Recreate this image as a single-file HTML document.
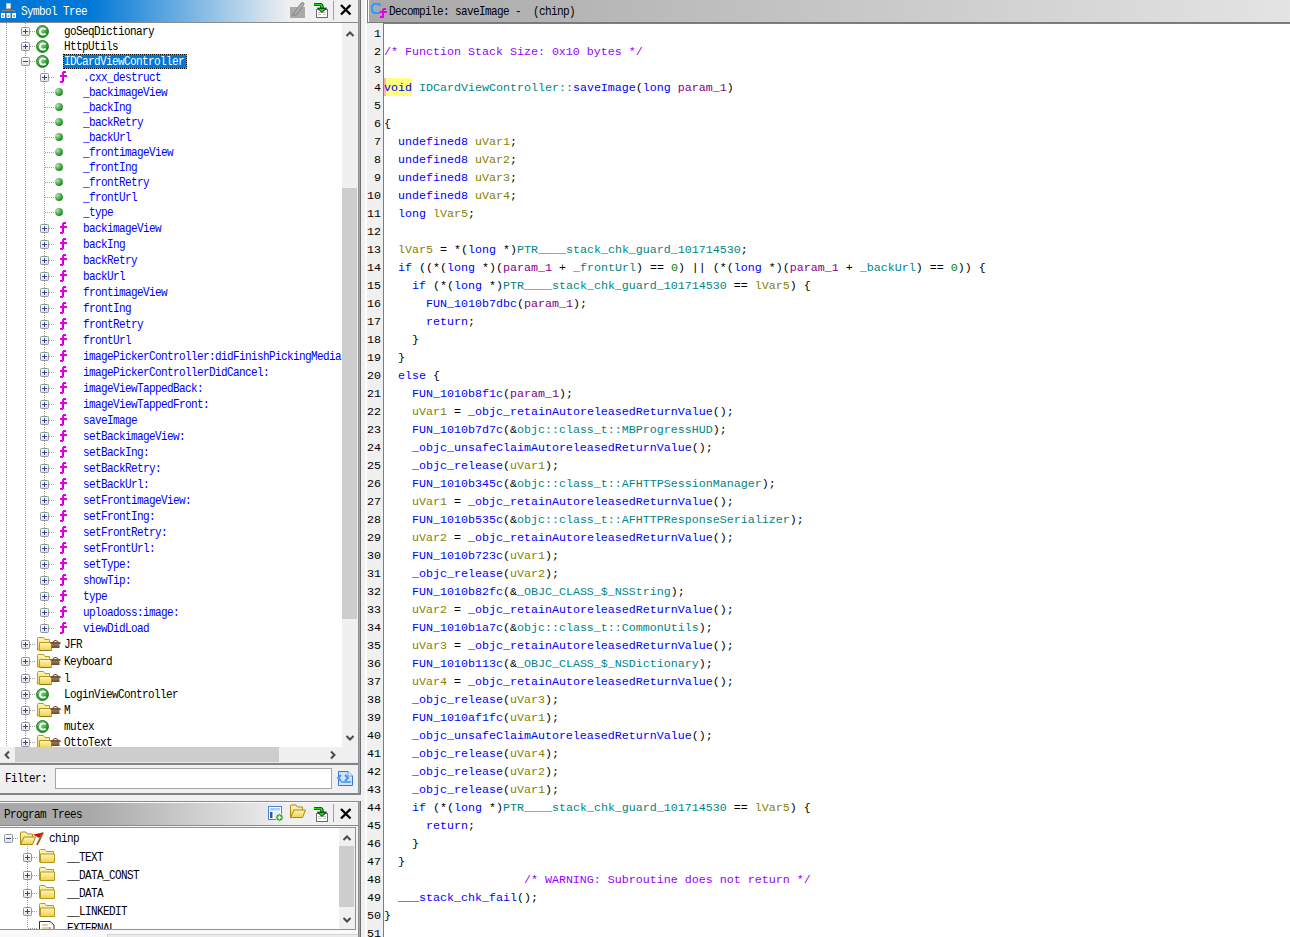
<!DOCTYPE html><html><head><meta charset='utf-8'><style>
*{margin:0;padding:0;box-sizing:border-box}
html,body{width:1290px;height:937px;overflow:hidden;background:#f0f0f0;position:relative}
.a{position:absolute}
svg.a{overflow:visible}
.t{position:absolute;white-space:pre;font-family:'Liberation Mono',monospace;font-size:11px;letter-spacing:-0.6px;line-height:15px;color:#000;transform:scaleY(1.14);transform-origin:0 3.7px}
.code{position:absolute;left:384px;top:25px;font-family:'Liberation Mono',monospace;font-size:11.6667px;line-height:18px;white-space:pre;color:#000}
.ln{position:absolute;left:360px;top:25px;width:21px;text-align:right;font-family:'Liberation Mono',monospace;font-size:11.6667px;line-height:18px;white-space:pre;color:#000;letter-spacing:0px}
.k{color:#0000ff}.v{color:#858000}.g{color:#008585}.p{color:#850085}.f{color:#0000ff}.c{color:#9600ff}.n{color:#008000}
.dv{position:absolute;width:1px;background:repeating-linear-gradient(to bottom,#a0a0a0 0 1px,transparent 1px 2px)}
.dh{position:absolute;height:1px;background:repeating-linear-gradient(to right,#a0a0a0 0 1px,transparent 1px 2px)}
</style></head><body>
<svg width="0" height="0" style="position:absolute">
<defs>
<linearGradient id="gbox" x1="0" y1="0" x2="0" y2="1"><stop offset="0" stop-color="#ffffff"/><stop offset="1" stop-color="#e0e0e0"/></linearGradient>
<radialGradient id="gcls" cx="0.4" cy="0.35" r="0.7"><stop offset="0" stop-color="#a0d4a0"/><stop offset="0.45" stop-color="#4fae4f"/><stop offset="0.8" stop-color="#229022"/><stop offset="1" stop-color="#0e780e"/></radialGradient>
<radialGradient id="gdot" cx="0.3" cy="0.3" r="0.8"><stop offset="0" stop-color="#b8e0b8"/><stop offset="0.5" stop-color="#5cb05c"/><stop offset="1" stop-color="#108010"/></radialGradient>
<linearGradient id="gfold" x1="0" y1="0" x2="0" y2="1"><stop offset="0" stop-color="#fff6c0"/><stop offset="1" stop-color="#f0d048"/></linearGradient>
<linearGradient id="gbrief" x1="0" y1="0" x2="0" y2="1"><stop offset="0" stop-color="#a07858"/><stop offset="1" stop-color="#6a4830"/></linearGradient>
<symbol id="bplus" viewBox="0 0 9 9"><rect x="0.5" y="0.5" width="8" height="8" rx="1" fill="url(#gbox)" stroke="#959595"/><path d="M2 4.5H7M4.5 2V7" stroke="#2d4490" stroke-width="1"/></symbol>
<symbol id="bminus" viewBox="0 0 9 9"><rect x="0.5" y="0.5" width="8" height="8" rx="1" fill="url(#gbox)" stroke="#959595"/><path d="M2 4.5H7" stroke="#2d4490" stroke-width="1"/></symbol>
<symbol id="cls" viewBox="0 0 13 13"><circle cx="6.5" cy="6.5" r="6" fill="url(#gcls)" stroke="#138313" stroke-width="0.9"/><path d="M9.6 4.6C9.1 3.8 8.2 3.4 7.1 3.4C5.3 3.4 4 4.8 4 6.5C4 8.2 5.3 9.6 7.1 9.6C8.2 9.6 9.1 9.2 9.6 8.4" fill="none" stroke="#fff" stroke-width="1.9"/></symbol>
<symbol id="dot" viewBox="0 0 8 8"><circle cx="4" cy="4" r="3.9" fill="url(#gdot)"/></symbol>
<symbol id="fn" viewBox="0 0 7 12" shape-rendering="crispEdges"><rect x="2" y="1" width="2" height="10" fill="#e600e6"/><rect x="3" y="0" width="3" height="2" fill="#e600e6"/><rect x="0" y="4" width="7" height="2" fill="#e600e6"/><rect x="0" y="10" width="3" height="2" fill="#e600e6"/><rect x="4" y="1" width="1" height="1" fill="#b000b0"/><rect x="3" y="5" width="1" height="5" fill="#b800b8"/></symbol>
<symbol id="fold" viewBox="0 0 24 14"><path d="M0.5 13V1.5Q0.5 0.5 1.5 0.5H6.5L8 2.5H12.5V13Z" fill="url(#gfold)" stroke="#b89818"/><path d="M2.5 13.5V5.5H14.5V13.5Z" fill="url(#gfold)" stroke="#b89818"/><path d="M3 13.5H14" stroke="#8a7010" stroke-width="0.8"/><path d="M16 5Q18.5 2 21 5" fill="#fff" stroke="#5a3a20" stroke-width="1.1"/><rect x="13.5" y="5" width="10" height="2" fill="#7a5638"/><rect x="14.5" y="7" width="8" height="4" fill="url(#gbrief)"/></symbol>
<symbol id="pfold" viewBox="0 0 16 14"><path d="M0.5 13V1.5Q0.5 0.5 1.5 0.5H6L7.5 2.5H14.5V13Z" fill="url(#gfold)" stroke="#b89818"/><path d="M1.5 13.5V5H15.5V13.5Z" fill="url(#gfold)" stroke="#b89818"/></symbol>
</defs></svg>
<div class=a style='left:0;top:0;width:358px;height:22px;background:linear-gradient(to right,#0078d7 0px,#0078d7 90px,#f0f0f0 290px,#f0f0f0 358px)'></div>
<div class=a style='left:0;top:22px;width:358px;height:1px;background:#8c8c8c'></div>
<svg class=a style='left:0;top:1px' width="17" height="18" viewBox="0 0 17 18">
<rect x="6.5" y="2.5" width="4" height="5" fill="#fff" stroke="#ddd" stroke-width="0.5"/>
<path d="M2.5 11V9.5H14.5V11M8.5 7.5V9.5" fill="none" stroke="#a08060" stroke-width="1"/>
<rect x="1" y="12" width="4" height="5" fill="#fff"/><rect x="6.5" y="12" width="4" height="5" fill="#fff"/><rect x="12" y="12" width="4" height="5" fill="#fff"/>
<rect x="2" y="14" width="2" height="2" fill="#80b0e0"/><rect x="7.5" y="14" width="2" height="2" fill="#e0a070"/><rect x="13" y="14" width="2" height="2" fill="#80d080"/>
</svg>
<div class=t style='left:21px;top:3px;color:#fff;line-height:16px'>Symbol Tree</div>
<svg class=a style='left:290px;top:1px' width="16" height="18" viewBox="0 0 16 18">
<rect x="0" y="6" width="15" height="11" fill="#a9a9a9"/>
<path d="M12.5 3L5 13" stroke="#8e8e8e" stroke-width="4" stroke-linecap="round"/>
<path d="M12.5 3L5 13" stroke="#b4b4b4" stroke-width="1.6" stroke-linecap="round"/>
<path d="M2.5 15V13H5" fill="none" stroke="#8a8a8a" stroke-width="1"/>
</svg>
<svg class=a style='left:313px;top:1px' width="16" height="17" viewBox="0 0 16 17">
<rect x="3.5" y="8.5" width="11" height="8" fill="#fff" stroke="#6a6a6a"/>
<path d="M3.5 8.5H14.5" stroke="#2a8cff"/>
<path d="M5 11.5H8M10 11.5H13M5 13.5H8M10 13.5H13" stroke="#c4c4c4"/>
<path d="M1 3.5H7Q9 3.5 9 6V8" fill="none" stroke="#000" stroke-width="3.2"/>
<path d="M1 3.5H7Q9 3.5 9 6V8" fill="none" stroke="#10e010" stroke-width="1.8"/>
<path d="M4.5 7.2H13.5L9 11.5Z" fill="#10e010" stroke="#000" stroke-width="0.9"/>
</svg>
<div class=a style='left:333px;top:1px;width:1px;height:19px;background:#a0a0a0'></div>
<svg class=a style='left:340px;top:4px' width="12" height="12" viewBox="0 0 12 12"><path d="M1 1L10.5 10.5M10.5 1L1 10.5" stroke="#000" stroke-width="2.3"/></svg>
<div class=a style='left:0;top:23px;width:342px;height:724px;background:#fff'></div>
<div class=a style='left:342px;top:23px;width:16px;height:724px;background:#f0f0f0'></div>
<div class=a style='left:342px;top:188px;width:15px;height:431px;background:#cdcdcd'></div>
<svg class=a style='left:343.5px;top:27.5px' width="12" height="12" viewBox="-6 -6 12 12"><path d="M-3.5 2L0 -1.5L3.5 2" fill="none" stroke="#4a4a4a" stroke-width="2"/></svg>
<svg class=a style='left:343.5px;top:731.5px' width="12" height="12" viewBox="-6 -6 12 12"><path d="M-3.5 -2L0 1.5L3.5 -2" fill="none" stroke="#4a4a4a" stroke-width="2"/></svg>
<div class=a style='left:0;top:747px;width:342px;height:15px;background:#f0f0f0'></div>
<div class=a style='left:15px;top:747px;width:264px;height:15px;background:#cdcdcd'></div>
<svg class=a style='left:0.5px;top:748.5px' width="12" height="12" viewBox="-6 -6 12 12"><path d="M2 -3.5L-1.5 0L2 3.5" fill="none" stroke="#4a4a4a" stroke-width="2"/></svg>
<svg class=a style='left:327px;top:748.5px' width="12" height="12" viewBox="-6 -6 12 12"><path d="M-2 -3.5L1.5 0L-2 3.5" fill="none" stroke="#4a4a4a" stroke-width="2"/></svg>
<div class=a style='left:0;top:762px;width:358px;height:1px;background:#e8e8e8'></div>
<div class=a style='left:0;top:763px;width:358px;height:2px;background:#7e848a'></div>
<div class=a style='left:358px;top:0;width:1px;height:795px;background:#8a9098'></div>
<div class=a style='left:359px;top:0;width:1px;height:795px;background:#a4a4a4'></div>
<div class=a style='left:360px;top:0;width:1px;height:795px;background:#707070'></div>
<div class=t style='left:5px;top:770px;line-height:16px'>Filter:</div>
<div class=a style='left:55px;top:768px;width:277px;height:21px;background:#fff;border:1px solid #a5a5a5'></div>
<svg class=a style='left:337px;top:770px' width="17" height="17" viewBox="0 0 17 17">
<path d="M1.5 1.5H11L15.5 6V15.5H1.5Z" fill="#cfe4fb" stroke="#3a78d0"/>
<path d="M11 1.5V6H15.5" fill="#eaf4ff" stroke="#3a78d0" stroke-width="0.7"/>
<rect x="4" y="11" width="10" height="2" fill="#5aaaf0"/>
<path d="M4 5L1 8L4 11M8 5L11 8L8 11" fill="none" stroke="#4a90e8" stroke-width="1.8"/>
</svg>
<div class=a style='left:0;top:793px;width:361px;height:2px;background:#7e848a'></div>
<div class=a style='left:0;top:801px;width:361px;height:1px;background:#8a8a8a'></div>
<div class=a style='left:0;top:802px;width:358px;height:1px;background:#fafafa'></div>
<div class=a style='left:0;top:803px;width:358px;height:22px;background:linear-gradient(to right,#a8a8a8 0px,#a8a8a8 90px,#f0f0f0 290px)'></div>
<div class=a style='left:358px;top:801px;width:1px;height:136px;background:#8a9098'></div>
<div class=a style='left:359px;top:801px;width:1px;height:136px;background:#a4a4a4'></div>
<div class=a style='left:360px;top:801px;width:1px;height:136px;background:#707070'></div>
<div class=a style='left:0;top:825px;width:358px;height:1px;background:#8a8a8a'></div>
<div class=t style='left:4px;top:806px;line-height:16px'>Program Trees</div>
<svg class=a style='left:267px;top:805px' width="17" height="17" viewBox="0 0 17 17">
<rect x="1.5" y="1.5" width="13" height="13" fill="#fff" stroke="#4a86d8"/>
<rect x="3" y="3" width="10" height="2.5" fill="#a8cef4"/>
<rect x="3" y="7" width="2.5" height="6" fill="#2a5aa8"/>
<rect x="7" y="7" width="6" height="6" fill="#e4eefa"/>
<circle cx="12.5" cy="12.5" r="3.8" fill="#3a9a3a" stroke="#fff" stroke-width="0.8"/>
<path d="M10.5 12.5H14.5M12.5 10.5V14.5" stroke="#fff" stroke-width="1.4"/>
</svg>
<svg class=a style='left:290px;top:804px' width="17" height="16" viewBox="0 0 17 16">
<path d="M0.5 13.5V2Q0.5 1 1.5 1H6L7.5 3H12.5V6" fill="url(#gfold)" stroke="#a88a10"/>
<path d="M0.5 13.5L4 6H15.5L12.5 13.5Z" fill="url(#gfold)" stroke="#a88a10"/>
</svg>
<svg class=a style='left:313px;top:805px' width="16" height="17" viewBox="0 0 16 17">
<rect x="3.5" y="8.5" width="11" height="8" fill="#fff" stroke="#6a6a6a"/>
<path d="M3.5 8.5H14.5" stroke="#2a8cff"/>
<path d="M5 11.5H8M10 11.5H13M5 13.5H8M10 13.5H13" stroke="#c4c4c4"/>
<path d="M1 3.5H7Q9 3.5 9 6V8" fill="none" stroke="#000" stroke-width="3.2"/>
<path d="M1 3.5H7Q9 3.5 9 6V8" fill="none" stroke="#10e010" stroke-width="1.8"/>
<path d="M4.5 7.2H13.5L9 11.5Z" fill="#10e010" stroke="#000" stroke-width="0.9"/>
</svg>
<div class=a style='left:333px;top:804px;width:1px;height:18px;background:#a0a0a0'></div>
<svg class=a style='left:340px;top:808px' width="12" height="12" viewBox="0 0 12 12"><path d="M1 1L10.5 10.5M10.5 1L1 10.5" stroke="#000" stroke-width="2.3"/></svg>
<div class=a style='left:0;top:826px;width:358px;height:1px;background:#f8f8f8'></div>
<div class=a style='left:0;top:827px;width:356px;height:1px;background:#909090'></div>
<div class=a style='left:0;top:828px;width:355px;height:101px;background:#fff'></div>
<div class=a style='left:355px;top:827px;width:1px;height:103px;background:#909090'></div>
<div class=a style='left:0;top:929px;width:356px;height:1px;background:#909090'></div>
<div class=a style='left:339px;top:828px;width:16px;height:101px;background:#f0f0f0'></div>
<div class=a style='left:339px;top:846px;width:15px;height:61px;background:#cdcdcd'></div>
<svg class=a style='left:340.5px;top:832px' width="12" height="12" viewBox="-6 -6 12 12"><path d="M-3.5 2L0 -1.5L3.5 2" fill="none" stroke="#4a4a4a" stroke-width="2"/></svg>
<svg class=a style='left:340.5px;top:914px' width="12" height="12" viewBox="-6 -6 12 12"><path d="M-3.5 -2L0 1.5L3.5 -2" fill="none" stroke="#4a4a4a" stroke-width="2"/></svg>
<div class=a style='left:0;top:930px;width:358px;height:7px;background:#f9f9f9'></div>
<div class=a style='left:107px;top:934px;width:251px;height:3px;background:#ececec;border-top:1px solid #d4d4d4;border-left:1px solid #d4d4d4'></div>
<div class=a style='left:0;top:23px;width:342px;height:724px;overflow:hidden'>
<div class=dv style='left:6px;top:0;height:724px'></div>
<div class=dv style='left:25px;top:0;height:724px'></div>
<div class=dv style='left:44px;top:46px;height:559px'></div>
<svg class=a style='left:21px;top:4px' width=9 height=9><use href='#bplus'/></svg>
<div class=dh style='left:30px;top:8px;width:5px'></div>
<svg class=a style='left:36px;top:2px' width=13 height=13><use href='#cls'/></svg>
<div class=t style='left:64px;top:1px;line-height:15px;color:#000;transform-origin:0 3.18px'>goSeqDictionary</div>
<svg class=a style='left:21px;top:19px' width=9 height=9><use href='#bplus'/></svg>
<div class=dh style='left:30px;top:23px;width:5px'></div>
<svg class=a style='left:36px;top:17px' width=13 height=13><use href='#cls'/></svg>
<div class=t style='left:64px;top:16px;line-height:15px;color:#000;transform-origin:0 3.18px'>HttpUtils</div>
<svg class=a style='left:21px;top:34px' width=9 height=9><use href='#bminus'/></svg>
<div class=dh style='left:30px;top:38px;width:5px'></div>
<svg class=a style='left:36px;top:32px' width=13 height=13><use href='#cls'/></svg>
<div class=a style='left:63px;top:31px;width:124px;height:15px;background:#ff9020;border:1px dotted #000'><div style='width:122px;height:13px;background:#0078d7'></div></div>
<div class=t style='left:64px;top:31px;line-height:15px;color:#fff;transform-origin:0 3.18px'>IDCardViewController</div>
<svg class=a style='left:40px;top:50px' width=9 height=9><use href='#bplus'/></svg>
<div class=dh style='left:49px;top:54px;width:5px'></div>
<svg class=a style='left:60px;top:48px' width=7 height=12><use href='#fn'/></svg>
<div class=t style='left:83px;top:46px;line-height:16px;color:#0000ff;transform-origin:0 3.68px'>.cxx_destruct</div>
<div class=dh style='left:45px;top:69px;width:10px'></div>
<svg class=a style='left:55px;top:65px' width=8 height=8><use href='#dot'/></svg>
<div class=t style='left:83px;top:62px;line-height:15px;color:#0000ff;transform-origin:0 3.18px'>_backimageView</div>
<div class=dh style='left:45px;top:84px;width:10px'></div>
<svg class=a style='left:55px;top:80px' width=8 height=8><use href='#dot'/></svg>
<div class=t style='left:83px;top:77px;line-height:15px;color:#0000ff;transform-origin:0 3.18px'>_backIng</div>
<div class=dh style='left:45px;top:99px;width:10px'></div>
<svg class=a style='left:55px;top:95px' width=8 height=8><use href='#dot'/></svg>
<div class=t style='left:83px;top:92px;line-height:15px;color:#0000ff;transform-origin:0 3.18px'>_backRetry</div>
<div class=dh style='left:45px;top:114px;width:10px'></div>
<svg class=a style='left:55px;top:110px' width=8 height=8><use href='#dot'/></svg>
<div class=t style='left:83px;top:107px;line-height:15px;color:#0000ff;transform-origin:0 3.18px'>_backUrl</div>
<div class=dh style='left:45px;top:129px;width:10px'></div>
<svg class=a style='left:55px;top:125px' width=8 height=8><use href='#dot'/></svg>
<div class=t style='left:83px;top:122px;line-height:15px;color:#0000ff;transform-origin:0 3.18px'>_frontimageView</div>
<div class=dh style='left:45px;top:144px;width:10px'></div>
<svg class=a style='left:55px;top:140px' width=8 height=8><use href='#dot'/></svg>
<div class=t style='left:83px;top:137px;line-height:15px;color:#0000ff;transform-origin:0 3.18px'>_frontIng</div>
<div class=dh style='left:45px;top:159px;width:10px'></div>
<svg class=a style='left:55px;top:155px' width=8 height=8><use href='#dot'/></svg>
<div class=t style='left:83px;top:152px;line-height:15px;color:#0000ff;transform-origin:0 3.18px'>_frontRetry</div>
<div class=dh style='left:45px;top:174px;width:10px'></div>
<svg class=a style='left:55px;top:170px' width=8 height=8><use href='#dot'/></svg>
<div class=t style='left:83px;top:167px;line-height:15px;color:#0000ff;transform-origin:0 3.18px'>_frontUrl</div>
<div class=dh style='left:45px;top:189px;width:10px'></div>
<svg class=a style='left:55px;top:185px' width=8 height=8><use href='#dot'/></svg>
<div class=t style='left:83px;top:182px;line-height:15px;color:#0000ff;transform-origin:0 3.18px'>_type</div>
<svg class=a style='left:40px;top:201px' width=9 height=9><use href='#bplus'/></svg>
<div class=dh style='left:49px;top:205px;width:5px'></div>
<svg class=a style='left:60px;top:199px' width=7 height=12><use href='#fn'/></svg>
<div class=t style='left:83px;top:197px;line-height:16px;color:#0000ff;transform-origin:0 3.68px'>backimageView</div>
<svg class=a style='left:40px;top:217px' width=9 height=9><use href='#bplus'/></svg>
<div class=dh style='left:49px;top:221px;width:5px'></div>
<svg class=a style='left:60px;top:215px' width=7 height=12><use href='#fn'/></svg>
<div class=t style='left:83px;top:213px;line-height:16px;color:#0000ff;transform-origin:0 3.68px'>backIng</div>
<svg class=a style='left:40px;top:233px' width=9 height=9><use href='#bplus'/></svg>
<div class=dh style='left:49px;top:237px;width:5px'></div>
<svg class=a style='left:60px;top:231px' width=7 height=12><use href='#fn'/></svg>
<div class=t style='left:83px;top:229px;line-height:16px;color:#0000ff;transform-origin:0 3.68px'>backRetry</div>
<svg class=a style='left:40px;top:249px' width=9 height=9><use href='#bplus'/></svg>
<div class=dh style='left:49px;top:253px;width:5px'></div>
<svg class=a style='left:60px;top:247px' width=7 height=12><use href='#fn'/></svg>
<div class=t style='left:83px;top:245px;line-height:16px;color:#0000ff;transform-origin:0 3.68px'>backUrl</div>
<svg class=a style='left:40px;top:265px' width=9 height=9><use href='#bplus'/></svg>
<div class=dh style='left:49px;top:269px;width:5px'></div>
<svg class=a style='left:60px;top:263px' width=7 height=12><use href='#fn'/></svg>
<div class=t style='left:83px;top:261px;line-height:16px;color:#0000ff;transform-origin:0 3.68px'>frontimageView</div>
<svg class=a style='left:40px;top:281px' width=9 height=9><use href='#bplus'/></svg>
<div class=dh style='left:49px;top:285px;width:5px'></div>
<svg class=a style='left:60px;top:279px' width=7 height=12><use href='#fn'/></svg>
<div class=t style='left:83px;top:277px;line-height:16px;color:#0000ff;transform-origin:0 3.68px'>frontIng</div>
<svg class=a style='left:40px;top:297px' width=9 height=9><use href='#bplus'/></svg>
<div class=dh style='left:49px;top:301px;width:5px'></div>
<svg class=a style='left:60px;top:295px' width=7 height=12><use href='#fn'/></svg>
<div class=t style='left:83px;top:293px;line-height:16px;color:#0000ff;transform-origin:0 3.68px'>frontRetry</div>
<svg class=a style='left:40px;top:313px' width=9 height=9><use href='#bplus'/></svg>
<div class=dh style='left:49px;top:317px;width:5px'></div>
<svg class=a style='left:60px;top:311px' width=7 height=12><use href='#fn'/></svg>
<div class=t style='left:83px;top:309px;line-height:16px;color:#0000ff;transform-origin:0 3.68px'>frontUrl</div>
<svg class=a style='left:40px;top:329px' width=9 height=9><use href='#bplus'/></svg>
<div class=dh style='left:49px;top:333px;width:5px'></div>
<svg class=a style='left:60px;top:327px' width=7 height=12><use href='#fn'/></svg>
<div class=t style='left:83px;top:325px;line-height:16px;color:#0000ff;transform-origin:0 3.68px'>imagePickerController:didFinishPickingMedia</div>
<svg class=a style='left:40px;top:345px' width=9 height=9><use href='#bplus'/></svg>
<div class=dh style='left:49px;top:349px;width:5px'></div>
<svg class=a style='left:60px;top:343px' width=7 height=12><use href='#fn'/></svg>
<div class=t style='left:83px;top:341px;line-height:16px;color:#0000ff;transform-origin:0 3.68px'>imagePickerControllerDidCancel:</div>
<svg class=a style='left:40px;top:361px' width=9 height=9><use href='#bplus'/></svg>
<div class=dh style='left:49px;top:365px;width:5px'></div>
<svg class=a style='left:60px;top:359px' width=7 height=12><use href='#fn'/></svg>
<div class=t style='left:83px;top:357px;line-height:16px;color:#0000ff;transform-origin:0 3.68px'>imageViewTappedBack:</div>
<svg class=a style='left:40px;top:377px' width=9 height=9><use href='#bplus'/></svg>
<div class=dh style='left:49px;top:381px;width:5px'></div>
<svg class=a style='left:60px;top:375px' width=7 height=12><use href='#fn'/></svg>
<div class=t style='left:83px;top:373px;line-height:16px;color:#0000ff;transform-origin:0 3.68px'>imageViewTappedFront:</div>
<svg class=a style='left:40px;top:393px' width=9 height=9><use href='#bplus'/></svg>
<div class=dh style='left:49px;top:397px;width:5px'></div>
<svg class=a style='left:60px;top:391px' width=7 height=12><use href='#fn'/></svg>
<div class=t style='left:83px;top:389px;line-height:16px;color:#0000ff;transform-origin:0 3.68px'>saveImage</div>
<svg class=a style='left:40px;top:409px' width=9 height=9><use href='#bplus'/></svg>
<div class=dh style='left:49px;top:413px;width:5px'></div>
<svg class=a style='left:60px;top:407px' width=7 height=12><use href='#fn'/></svg>
<div class=t style='left:83px;top:405px;line-height:16px;color:#0000ff;transform-origin:0 3.68px'>setBackimageView:</div>
<svg class=a style='left:40px;top:425px' width=9 height=9><use href='#bplus'/></svg>
<div class=dh style='left:49px;top:429px;width:5px'></div>
<svg class=a style='left:60px;top:423px' width=7 height=12><use href='#fn'/></svg>
<div class=t style='left:83px;top:421px;line-height:16px;color:#0000ff;transform-origin:0 3.68px'>setBackIng:</div>
<svg class=a style='left:40px;top:441px' width=9 height=9><use href='#bplus'/></svg>
<div class=dh style='left:49px;top:445px;width:5px'></div>
<svg class=a style='left:60px;top:439px' width=7 height=12><use href='#fn'/></svg>
<div class=t style='left:83px;top:437px;line-height:16px;color:#0000ff;transform-origin:0 3.68px'>setBackRetry:</div>
<svg class=a style='left:40px;top:457px' width=9 height=9><use href='#bplus'/></svg>
<div class=dh style='left:49px;top:461px;width:5px'></div>
<svg class=a style='left:60px;top:455px' width=7 height=12><use href='#fn'/></svg>
<div class=t style='left:83px;top:453px;line-height:16px;color:#0000ff;transform-origin:0 3.68px'>setBackUrl:</div>
<svg class=a style='left:40px;top:473px' width=9 height=9><use href='#bplus'/></svg>
<div class=dh style='left:49px;top:477px;width:5px'></div>
<svg class=a style='left:60px;top:471px' width=7 height=12><use href='#fn'/></svg>
<div class=t style='left:83px;top:469px;line-height:16px;color:#0000ff;transform-origin:0 3.68px'>setFrontimageView:</div>
<svg class=a style='left:40px;top:489px' width=9 height=9><use href='#bplus'/></svg>
<div class=dh style='left:49px;top:493px;width:5px'></div>
<svg class=a style='left:60px;top:487px' width=7 height=12><use href='#fn'/></svg>
<div class=t style='left:83px;top:485px;line-height:16px;color:#0000ff;transform-origin:0 3.68px'>setFrontIng:</div>
<svg class=a style='left:40px;top:505px' width=9 height=9><use href='#bplus'/></svg>
<div class=dh style='left:49px;top:509px;width:5px'></div>
<svg class=a style='left:60px;top:503px' width=7 height=12><use href='#fn'/></svg>
<div class=t style='left:83px;top:501px;line-height:16px;color:#0000ff;transform-origin:0 3.68px'>setFrontRetry:</div>
<svg class=a style='left:40px;top:521px' width=9 height=9><use href='#bplus'/></svg>
<div class=dh style='left:49px;top:525px;width:5px'></div>
<svg class=a style='left:60px;top:519px' width=7 height=12><use href='#fn'/></svg>
<div class=t style='left:83px;top:517px;line-height:16px;color:#0000ff;transform-origin:0 3.68px'>setFrontUrl:</div>
<svg class=a style='left:40px;top:537px' width=9 height=9><use href='#bplus'/></svg>
<div class=dh style='left:49px;top:541px;width:5px'></div>
<svg class=a style='left:60px;top:535px' width=7 height=12><use href='#fn'/></svg>
<div class=t style='left:83px;top:533px;line-height:16px;color:#0000ff;transform-origin:0 3.68px'>setType:</div>
<svg class=a style='left:40px;top:553px' width=9 height=9><use href='#bplus'/></svg>
<div class=dh style='left:49px;top:557px;width:5px'></div>
<svg class=a style='left:60px;top:551px' width=7 height=12><use href='#fn'/></svg>
<div class=t style='left:83px;top:549px;line-height:16px;color:#0000ff;transform-origin:0 3.68px'>showTip:</div>
<svg class=a style='left:40px;top:569px' width=9 height=9><use href='#bplus'/></svg>
<div class=dh style='left:49px;top:573px;width:5px'></div>
<svg class=a style='left:60px;top:567px' width=7 height=12><use href='#fn'/></svg>
<div class=t style='left:83px;top:565px;line-height:16px;color:#0000ff;transform-origin:0 3.68px'>type</div>
<svg class=a style='left:40px;top:585px' width=9 height=9><use href='#bplus'/></svg>
<div class=dh style='left:49px;top:589px;width:5px'></div>
<svg class=a style='left:60px;top:583px' width=7 height=12><use href='#fn'/></svg>
<div class=t style='left:83px;top:581px;line-height:16px;color:#0000ff;transform-origin:0 3.68px'>uploadoss:image:</div>
<svg class=a style='left:40px;top:601px' width=9 height=9><use href='#bplus'/></svg>
<div class=dh style='left:49px;top:605px;width:5px'></div>
<svg class=a style='left:60px;top:599px' width=7 height=12><use href='#fn'/></svg>
<div class=t style='left:83px;top:597px;line-height:16px;color:#0000ff;transform-origin:0 3.68px'>viewDidLoad</div>
<svg class=a style='left:21px;top:617px' width=9 height=9><use href='#bplus'/></svg>
<div class=dh style='left:30px;top:621px;width:6px'></div>
<svg class=a style='left:37px;top:614px' width=24 height=14><use href='#fold'/></svg>
<div class=t style='left:64px;top:613px;line-height:17px;color:#000;transform-origin:0 4.18px'>JFR</div>
<svg class=a style='left:21px;top:634px' width=9 height=9><use href='#bplus'/></svg>
<div class=dh style='left:30px;top:638px;width:6px'></div>
<svg class=a style='left:37px;top:631px' width=24 height=14><use href='#fold'/></svg>
<div class=t style='left:64px;top:630px;line-height:17px;color:#000;transform-origin:0 4.18px'>Keyboard</div>
<svg class=a style='left:21px;top:651px' width=9 height=9><use href='#bplus'/></svg>
<div class=dh style='left:30px;top:655px;width:6px'></div>
<svg class=a style='left:37px;top:648px' width=24 height=14><use href='#fold'/></svg>
<div class=t style='left:64px;top:647px;line-height:17px;color:#000;transform-origin:0 4.18px'>l</div>
<svg class=a style='left:21px;top:667px' width=9 height=9><use href='#bplus'/></svg>
<div class=dh style='left:30px;top:671px;width:5px'></div>
<svg class=a style='left:36px;top:665px' width=13 height=13><use href='#cls'/></svg>
<div class=t style='left:64px;top:664px;line-height:15px;color:#000;transform-origin:0 3.18px'>LoginViewController</div>
<svg class=a style='left:21px;top:683px' width=9 height=9><use href='#bplus'/></svg>
<div class=dh style='left:30px;top:687px;width:6px'></div>
<svg class=a style='left:37px;top:680px' width=24 height=14><use href='#fold'/></svg>
<div class=t style='left:64px;top:679px;line-height:17px;color:#000;transform-origin:0 4.18px'>M</div>
<svg class=a style='left:21px;top:699px' width=9 height=9><use href='#bplus'/></svg>
<div class=dh style='left:30px;top:703px;width:5px'></div>
<svg class=a style='left:36px;top:697px' width=13 height=13><use href='#cls'/></svg>
<div class=t style='left:64px;top:696px;line-height:15px;color:#000;transform-origin:0 3.18px'>mutex</div>
<svg class=a style='left:21px;top:715px' width=9 height=9><use href='#bplus'/></svg>
<div class=dh style='left:30px;top:719px;width:6px'></div>
<svg class=a style='left:37px;top:712px' width=24 height=14><use href='#fold'/></svg>
<div class=t style='left:64px;top:711px;line-height:17px;color:#000;transform-origin:0 4.18px'>OttoText</div>
</div>
<div class=a style='left:0;top:828px;width:339px;height:101px;overflow:hidden'>
<div class=dv style='left:27px;top:18px;height:82px'></div>
<div class=dh style='left:28px;top:100px;width:10px'></div>
<svg class=a style='left:4px;top:6px' width=9 height=9><use href='#bminus'/></svg>
<div class=dh style='left:13px;top:10px;width:6px'></div>
<svg class=a style='left:20px;top:3px' width="25" height="16" viewBox="0 0 25 16">
<path d="M0.5 13.5V2Q0.5 1 1.5 1H6L7.5 3H12.5V6" fill="url(#gfold)" stroke="#a88a10"/>
<path d="M0.5 13.5L4 6H15.5L12.5 13.5Z" fill="url(#gfold)" stroke="#a88a10"/>
<path d="M13 3.5L23 1.5L19 7Z" fill="#d01010"/>
<path d="M23 1.5L17 14" stroke="#8a6a20" stroke-width="1.8"/>
</svg>
<div class=t style='left:49px;top:2px;line-height:16px'>chinp</div>
<svg class=a style='left:23px;top:25px' width=9 height=9><use href='#bplus'/></svg>
<div class=dh style='left:32px;top:29px;width:6px'></div>
<svg class=a style='left:39px;top:21px' width=16 height=14><use href='#pfold'/></svg>
<div class=t style='left:67px;top:21px;line-height:16px'>__TEXT</div>
<svg class=a style='left:23px;top:43px' width=9 height=9><use href='#bplus'/></svg>
<div class=dh style='left:32px;top:47px;width:6px'></div>
<svg class=a style='left:39px;top:39px' width=16 height=14><use href='#pfold'/></svg>
<div class=t style='left:67px;top:39px;line-height:16px'>__DATA_CONST</div>
<svg class=a style='left:23px;top:61px' width=9 height=9><use href='#bplus'/></svg>
<div class=dh style='left:32px;top:65px;width:6px'></div>
<svg class=a style='left:39px;top:57px' width=16 height=14><use href='#pfold'/></svg>
<div class=t style='left:67px;top:57px;line-height:16px'>__DATA</div>
<svg class=a style='left:23px;top:79px' width=9 height=9><use href='#bplus'/></svg>
<div class=dh style='left:32px;top:83px;width:6px'></div>
<svg class=a style='left:39px;top:75px' width=16 height=14><use href='#pfold'/></svg>
<div class=t style='left:67px;top:75px;line-height:16px'>__LINKEDIT</div>
<svg class=a style='left:39px;top:93px' width="16" height="14" viewBox="0 0 16 14">
<path d="M0.5 0.5H11L15 4V13.5H0.5Z" fill="#fff" stroke="#303030"/>
<path d="M3 4H9M3 7H11" stroke="#c0a060"/><path d="M10 7H12" stroke="#c05020"/>
</svg>
<div class=t style='left:67px;top:92px;line-height:16px'>EXTERNAL</div>
</div>
<div class=a style='left:361px;top:0;width:4px;height:937px;background:#f0f0f0'></div>
<div class=a style='left:365px;top:0;width:2px;height:937px;background:#fcfcfc'></div>
<div class=a style='left:367px;top:0;width:1px;height:23px;background:#808080'></div>
<div class=a style='left:368px;top:0;width:1px;height:22px;background:#fff'></div>
<div class=a style='left:369px;top:0;width:921px;height:22px;background:linear-gradient(to right,#a8a8a8,#e4e4e4)'></div>
<div class=a style='left:367px;top:22px;width:923px;height:1px;background:#787878'></div>
<div class=a style='left:383px;top:23px;width:907px;height:1px;background:#7a7e86'></div>
<svg class=a style='left:371px;top:3px' width="16" height="16" viewBox="0 0 16 16" shape-rendering="crispEdges">
<rect x="2" y="0" width="7" height="2" fill="#3399ff"/><rect x="1" y="1" width="2" height="2" fill="#3399ff"/>
<rect x="0" y="2" width="2" height="7" fill="#3399ff"/><rect x="1" y="8" width="2" height="2" fill="#3399ff"/>
<rect x="2" y="9" width="7" height="2" fill="#3399ff"/><rect x="8" y="1" width="2" height="2" fill="#3399ff"/><rect x="8" y="8" width="2" height="2" fill="#3399ff"/>
<rect x="11" y="6" width="2" height="9" fill="#e600e6"/><rect x="12" y="5" width="3" height="2" fill="#e600e6"/>
<rect x="9" y="8" width="7" height="2" fill="#e600e6"/><rect x="9" y="13" width="3" height="2" fill="#e600e6"/>
</svg>
<div class=t style='left:389px;top:3px;line-height:16px'>Decompile: saveImage -  (chinp)</div>
<div class=a style='left:367px;top:23px;width:16px;height:914px;background:#f0f0f0'></div>
<div class=a style='left:383px;top:23px;width:1px;height:914px;background:#7a7e86'></div>
<div class=a style='left:384px;top:24px;width:906px;height:913px;background:#fff'></div>
<div class=a style='left:386px;top:78px;width:26px;height:18px;background:#ffff80'></div>
<div class=a style='left:384px;top:78px;width:2px;height:18px;background:#ffb0c0'></div>
<div class=ln>1
2
3
4
5
6
7
8
9
10
11
12
13
14
15
16
17
18
19
20
21
22
23
24
25
26
27
28
29
30
31
32
33
34
35
36
37
38
39
40
41
42
43
44
45
46
47
48
49
50
51</div>
<div class=code>
<span class=c>/* Function Stack Size: 0x10 bytes */</span>

<span class=k>void</span> <span class=g>IDCardViewController</span><span class=g>::</span><span class=f>saveImage</span>(<span class=k>long</span> <span class=p>param_1</span>)

{
  <span class=k>undefined8</span> <span class=v>uVar1</span>;
  <span class=k>undefined8</span> <span class=v>uVar2</span>;
  <span class=k>undefined8</span> <span class=v>uVar3</span>;
  <span class=k>undefined8</span> <span class=v>uVar4</span>;
  <span class=k>long</span> <span class=v>lVar5</span>;

  <span class=v>lVar5</span> = *(<span class=k>long</span> *)<span class=g>PTR____stack_chk_guard_101714530</span>;
  <span class=k>if</span> ((*(<span class=k>long</span> *)(<span class=p>param_1</span> + <span class=g>_frontUrl</span>) == <span class=n>0</span>) || (*(<span class=k>long</span> *)(<span class=p>param_1</span> + <span class=g>_backUrl</span>) == <span class=n>0</span>)) {
    <span class=k>if</span> (*(<span class=k>long</span> *)<span class=g>PTR____stack_chk_guard_101714530</span> == <span class=v>lVar5</span>) {
      <span class=f>FUN_1010b7dbc</span>(<span class=p>param_1</span>);
      <span class=k>return</span>;
    }
  }
  <span class=k>else</span> {
    <span class=f>FUN_1010b8f1c</span>(<span class=p>param_1</span>);
    <span class=v>uVar1</span> = <span class=f>_objc_retainAutoreleasedReturnValue</span>();
    <span class=f>FUN_1010b7d7c</span>(&amp;<span class=g>objc::class_t::MBProgressHUD</span>);
    <span class=f>_objc_unsafeClaimAutoreleasedReturnValue</span>();
    <span class=f>_objc_release</span>(<span class=v>uVar1</span>);
    <span class=f>FUN_1010b345c</span>(&amp;<span class=g>objc::class_t::AFHTTPSessionManager</span>);
    <span class=v>uVar1</span> = <span class=f>_objc_retainAutoreleasedReturnValue</span>();
    <span class=f>FUN_1010b535c</span>(&amp;<span class=g>objc::class_t::AFHTTPResponseSerializer</span>);
    <span class=v>uVar2</span> = <span class=f>_objc_retainAutoreleasedReturnValue</span>();
    <span class=f>FUN_1010b723c</span>(<span class=v>uVar1</span>);
    <span class=f>_objc_release</span>(<span class=v>uVar2</span>);
    <span class=f>FUN_1010b82fc</span>(&amp;<span class=g>_OBJC_CLASS_$_NSString</span>);
    <span class=v>uVar2</span> = <span class=f>_objc_retainAutoreleasedReturnValue</span>();
    <span class=f>FUN_1010b1a7c</span>(&amp;<span class=g>objc::class_t::CommonUtils</span>);
    <span class=v>uVar3</span> = <span class=f>_objc_retainAutoreleasedReturnValue</span>();
    <span class=f>FUN_1010b113c</span>(&amp;<span class=g>_OBJC_CLASS_$_NSDictionary</span>);
    <span class=v>uVar4</span> = <span class=f>_objc_retainAutoreleasedReturnValue</span>();
    <span class=f>_objc_release</span>(<span class=v>uVar3</span>);
    <span class=f>FUN_1010af1fc</span>(<span class=v>uVar1</span>);
    <span class=f>_objc_unsafeClaimAutoreleasedReturnValue</span>();
    <span class=f>_objc_release</span>(<span class=v>uVar4</span>);
    <span class=f>_objc_release</span>(<span class=v>uVar2</span>);
    <span class=f>_objc_release</span>(<span class=v>uVar1</span>);
    <span class=k>if</span> (*(<span class=k>long</span> *)<span class=g>PTR____stack_chk_guard_101714530</span> == <span class=v>lVar5</span>) {
      <span class=k>return</span>;
    }
  }
                    <span class=c>/* WARNING: Subroutine does not return */</span>
  <span class=f>___stack_chk_fail</span>();
}</div>
</body></html>
